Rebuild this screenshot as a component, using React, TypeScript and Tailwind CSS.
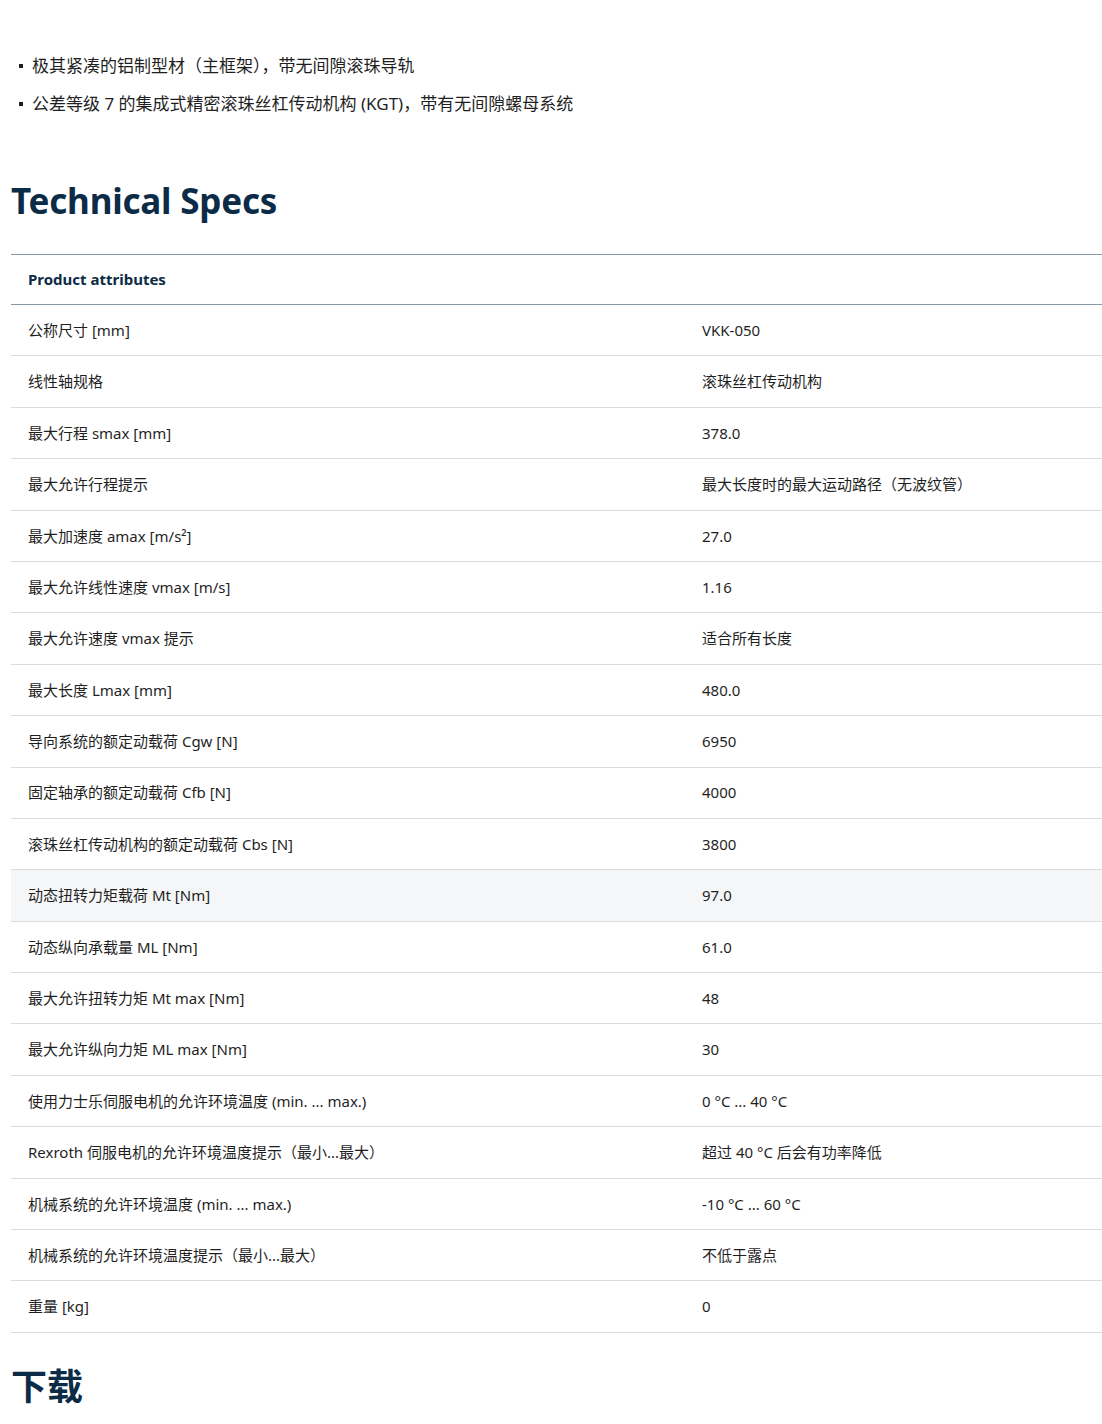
const rows: [string, string][] = [
  ["公称尺寸 [mm]", "VKK-050"],
  ["线性轴规格", "滚珠丝杠传动机构"],
  ["最大行程 smax [mm]", "378.0"],
  ["最大允许行程提示", "最大长度时的最大运动路径（无波纹管）"],
  ["最大加速度 amax [m/s²]", "27.0"],
  ["最大允许线性速度 vmax [m/s]", "1.16"],
  ["最大允许速度 vmax 提示", "适合所有长度"],
  ["最大长度 Lmax [mm]", "480.0"],
  ["导向系统的额定动载荷 Cgw [N]", "6950"],
  ["固定轴承的额定动载荷 Cfb [N]", "4000"],
  ["滚珠丝杠传动机构的额定动载荷 Cbs [N]", "3800"],
  ["动态扭转力矩载荷 Mt [Nm]", "97.0"],
  ["动态纵向承载量 ML [Nm]", "61.0"],
  ["最大允许扭转力矩 Mt max [Nm]", "48"],
  ["最大允许纵向力矩 ML max [Nm]", "30"],
  ["使用力士乐伺服电机的允许环境温度 (min. ... max.)", "0 °C ... 40 °C"],
  ["Rexroth 伺服电机的允许环境温度提示（最小...最大）", "超过 40 °C 后会有功率降低"],
  ["机械系统的允许环境温度 (min. ... max.)", "-10 °C ... 60 °C"],
  ["机械系统的允许环境温度提示（最小...最大）", "不低于露点"],
  ["重量 [kg]", "0"],
];

export default function App() {
  return (
    <div className="w-[1102px] h-[1424px] overflow-hidden bg-white text-[#1f1f1f]" style={{ fontFamily: '"Noto Sans", "Noto Sans CJK SC", sans-serif' }}>
      <div className="pl-[11px]">
        <ul className="pt-[53px] text-[17px] leading-[26px]">
          <li className="flex items-center h-[26px]"><span className="w-[4px] h-[4px] bg-[#1f1f1f] ml-[8px] mr-[9px]" />极其紧凑的铝制型材（主框架），带无间隙滚珠导轨</li>
          <li className="flex items-center h-[26px] mt-[12px]"><span className="w-[4px] h-[4px] bg-[#1f1f1f] ml-[8px] mr-[9px]" />公差等级 7 的集成式精密滚珠丝杠传动机构 (KGT)，带有无间隙螺母系统</li>
        </ul>
        <h2 className="mt-[62px] text-[35px] font-bold leading-[44px] text-[#0c2b47] tracking-[-0.2px]">Technical Specs</h2>
        <div className="mt-[31px] w-[1091px]">
          <div className="h-[51px] border-t border-b border-[#8a98a6] flex items-center px-[17px] text-[15px] font-bold text-[#0c2b47]">Product attributes</div>
          {rows.map(([a, b], i) => (
            <div key={i} className={`h-[51.4px] border-b border-[#dcdcdc] flex items-center text-[15px] ${i === 11 ? "bg-[#f5f6f7]" : ""}`}>
              <div className="w-[691px] pl-[17px]">{a}</div>
              <div>{b}</div>
            </div>
          ))}
        </div>
        <h2 className="mt-[32px] text-[36px] font-bold leading-[44px] text-[#0c2b47]">下载</h2>
      </div>
    </div>
  );
}
